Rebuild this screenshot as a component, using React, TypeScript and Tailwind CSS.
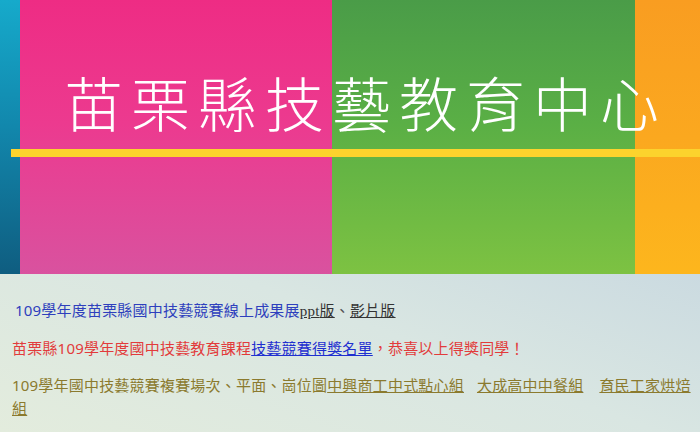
import React from "react";

export default function App() {
  const cjk = { fontFamily: '"Noto Sans", "Noto Sans CJK TC", sans-serif' };
  return (
    <div className="w-[700px] h-[432px] overflow-hidden bg-[linear-gradient(200deg,#b2c6d8_0%,#c8d8e0_35%,#d9e6e2_65%,#e3ecdd_100%)]" style={cjk}>
      <div className="relative h-[274px] flex">
        <div className="w-[20px] bg-[linear-gradient(180deg,#16aacb_0%,#1288ad_45%,#0f5d80_100%)]" />
        <div className="w-[312px] bg-[linear-gradient(180deg,#ee2c84_0%,#ec3a8f_45%,#d9529f_100%)]" />
        <div className="w-[303px] bg-[linear-gradient(180deg,#4a9c48_0%,#5aaf45_45%,#7dc242_100%)]" />
        <div className="flex-1 bg-[linear-gradient(180deg,#f99d21_0%,#fba81f_50%,#fdb61d_100%)]" />
        <div className="absolute left-[11px] right-0 top-[149px] h-[8px] bg-[#fcd32d]" />
        <div
          className="absolute left-[64px] top-[62px] text-white text-[59px] leading-[80px] tracking-[8px] whitespace-nowrap"
          style={{ fontFamily: '"Noto Sans CJK TC", sans-serif', fontWeight: 300 }}
        >
          苗栗縣技藝教育中心
        </div>
      </div>
      <div className="pt-[25px] text-[15px] leading-[23px] tracking-[0.2px]">
        <p className="pl-[15px] text-[#2e3fbd]">
          109學年度苗栗縣國中技藝競賽線上成果展
          <a className="underline text-[#333333]" href="#">
            <span style={{ fontFamily: '"Liberation Serif", serif' }}>ppt</span>版
          </a>
          <span className="text-[#555555]">、</span>
          <a className="underline text-[#333333]" href="#">影片版</a>
        </p>
        <p className="pl-[12px] mt-[14px] text-[#e23b3b]">
          苗栗縣109學年度國中技藝教育課程
          <a className="underline text-[#1f2fd0]" href="#">技藝競賽得獎名單</a>
          <span className="text-[#e23b3b]">，恭喜以上得獎同學！</span>
        </p>
        <p className="pl-[12px] mt-[14px] text-[#8b7a2e]">
          109學年國中技藝競賽複賽場次、平面、崗位圖
          <a className="underline" href="#">中興商工中式點心組</a>
          <span className="inline-block w-[13px]" />
          <a className="underline" href="#">大成高中中餐組</a>
          <span className="inline-block w-[16px]" />
          <a className="underline" href="#">
            育民工家烘焙
            <br />組
          </a>
        </p>
      </div>
    </div>
  );
}
